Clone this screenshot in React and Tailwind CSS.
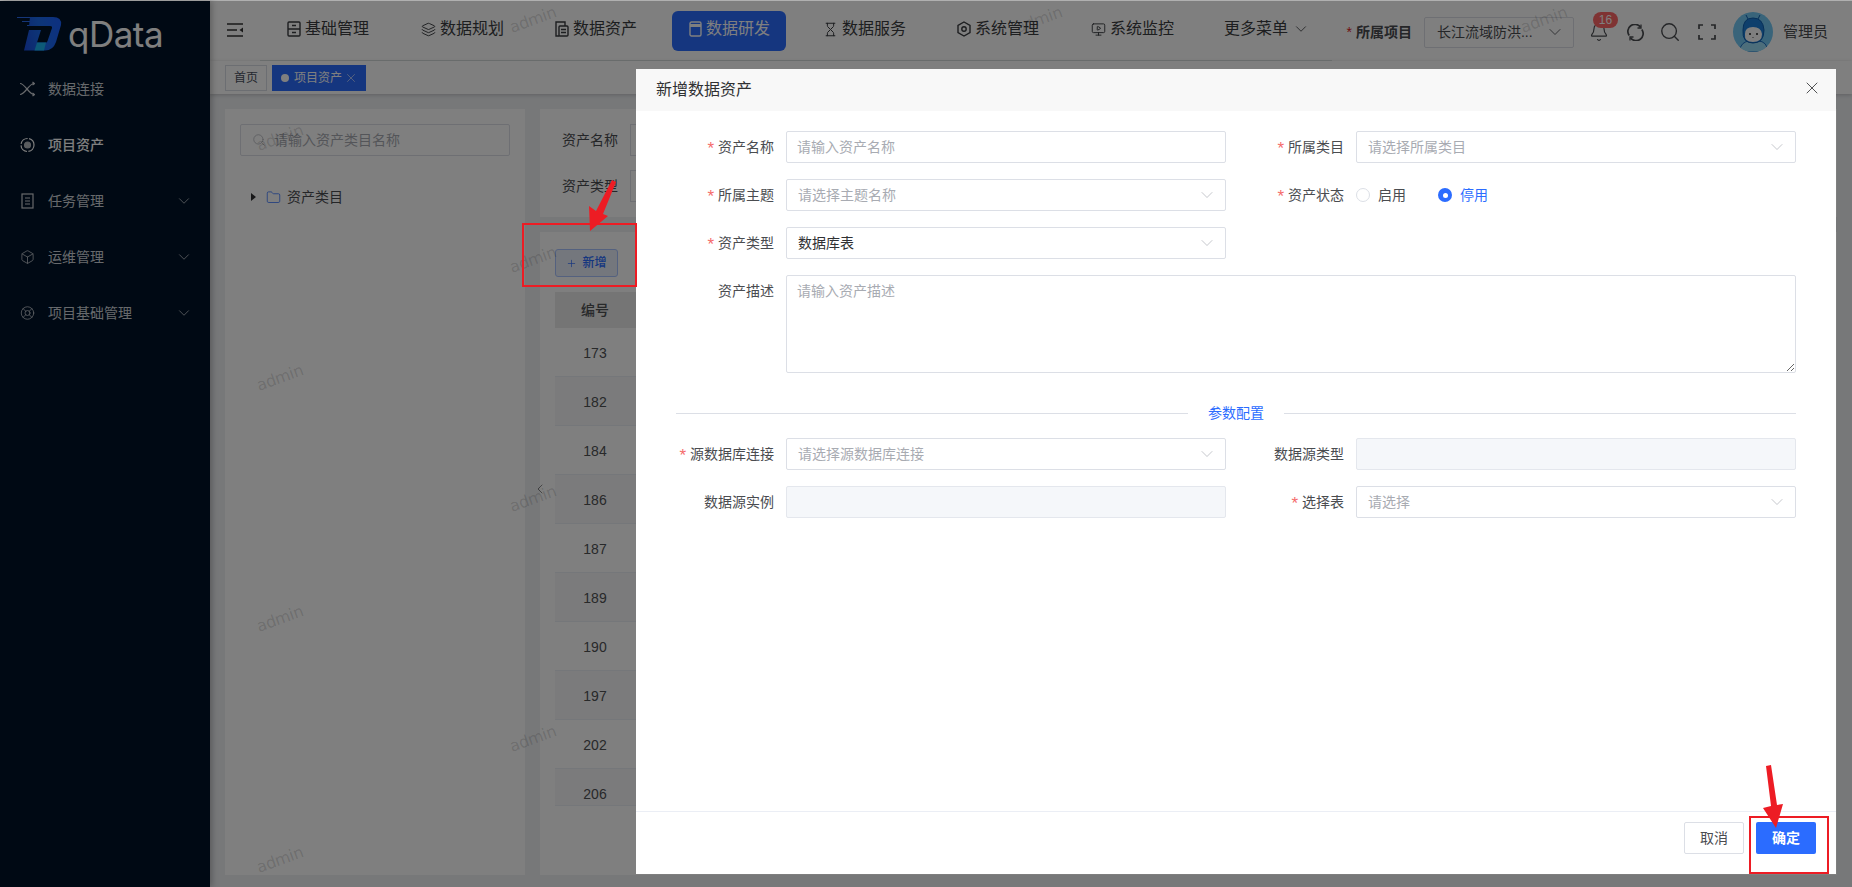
import React from 'react';
import {
  Box, ChevronDown, ChevronLeft, Layers, Hourglass, MonitorPlay, Bell, Search,
  X, Folder, LifeBuoy, Plus,
} from 'lucide-react';

const FONT = "font-['Liberation_Sans','Noto_Sans_CJK_SC',sans-serif]";

// 小图标
function BaseIcon() {
  return (
    <svg width="14" height="16" viewBox="0 0 14 16" fill="none" stroke="currentColor" strokeWidth="1.4">
      <rect x="1" y="1" width="12" height="14" rx="1" />
      <path d="M1 8h12M5 4.500h4M5 11.500h4" />
    </svg>
  );
}

function AssetIcon() {
  return (
    <svg width="14" height="16" viewBox="0 0 14 16" fill="none" stroke="currentColor" strokeWidth="1.4">
      <path d="M10 5V1H1v14h3" />
      <rect x="4" y="5" width="9" height="10" rx="1" />
      <path d="M6 8.500h5M6 11.500h5" />
    </svg>
  );
}

function DevIcon() {
  return (
    <svg width="13" height="16" viewBox="0 0 13 16" fill="none" stroke="currentColor" strokeWidth="1.4">
      <rect x="1" y="1" width="11" height="14" rx="1.500" />
      <path d="M1 4.500h11" strokeWidth="3" />
    </svg>
  );
}

function HexIcon() {
  return (
    <svg width="14" height="16" viewBox="0 0 14 16" fill="none" stroke="currentColor" strokeWidth="1.4">
      <path d="M7 1l6 3.500v7L7 15l-6-3.500v-7z" />
      <circle cx="7" cy="8" r="2.200" />
    </svg>
  );
}

function LinkIcon() {
  return (
    <svg width="15" height="16" viewBox="0 0 15 16" fill="none" stroke="currentColor" strokeWidth="1.2">
      <path d="M0 2.500C5 2.500 9 13.500 14 13.500M0 13.500C5 13.500 9 2.500 14 2.500" />
      <path d="M12.500 1l2 1.500-2 1.500M12.500 12l2 1.500-2 1.500" />
    </svg>
  );
}

function AssetSideIcon() {
  return (
    <svg width="15" height="16" viewBox="0 0 15 16" fill="none" stroke="currentColor" strokeWidth="1.2">
      <circle cx="7.500" cy="8" r="6.500" strokeDasharray="9 1.500" />
      <circle cx="7.500" cy="8" r="3" fill="currentColor" opacity="0.7" />
    </svg>
  );
}

function TaskIcon() {
  return (
    <svg width="13" height="16" viewBox="0 0 13 16" fill="none" stroke="currentColor" strokeWidth="1.2">
      <rect x="1" y="1" width="11" height="14" />
      <path d="M4 5h5M4 8h5M4 11h5" />
    </svg>
  );
}

function MenuFold() {
  return (
    <svg width="16" height="14" viewBox="0 0 16 14" fill="none" stroke="currentColor" strokeWidth="1.500">
      <path d="M0 1h16M0 7h10M0 13h16" />
      <path d="M16 4.500L12.500 7l3.500 2.500z" fill="currentColor" stroke="none" />
    </svg>
  );
}

function RefreshIcon() {
  return (
    <svg width="17" height="17" viewBox="0 0 17 17" fill="none" stroke="currentColor" strokeWidth="1.700" className="ml-[18px]">
      <path d="M2.200 11.500A7 7 0 0 1 13.500 3.200" />
      <path d="M14.800 5.500A7 7 0 0 1 3.500 13.800" />
      <path d="M14 0.500v3.500h-3.500M3 16.500V13h3.500" strokeWidth="1.300" />
    </svg>
  );
}

function FullScreenIcon() {
  return (
    <svg width="18" height="16" viewBox="0 0 18 16" fill="none" stroke="currentColor" strokeWidth="1.700" className="ml-[17px]">
      <path d="M1 5V1h4M13 1h4v4M17 11v4h-4M5 15H1v-4" />
    </svg>
  );
}

function Logo() {
  return (
    <svg width="45" height="34" viewBox="0 0 45 34" className="shrink-0">
      <defs>
        <linearGradient id="logo-d" x1="0" y1="0.8" x2="1" y2="0.6">
          <stop offset="0" stopColor="#1a4fe0" />
          <stop offset="0.5" stopColor="#1a6cf0" />
          <stop offset="1" stopColor="#1a62ff" />
        </linearGradient>
      </defs>
      <path d="M0 0h13v1H0zM5 4h11v1H5zM10 8h5v1h-5z" fill="#2a6cf0" />
      <path
        d="M13 0H36Q45 0 44 8L39 25Q36 33.500 28 33.500H7L12 13H24L20 25.500H29Q30 25.500 30.500 24L35 11Q35.500 9 33 9H12Z"
        fill="url(#logo-d)"
      />
      <path d="M20 25.500H29L27 33.500H17.500Z" fill="#1ab4f0" />
    </svg>
  );
}

function Avatar() {
  return (
    <svg width="40" height="40" viewBox="0 0 40 40" className="rounded-full shrink-0">
      <rect width="40" height="40" fill="#72c8f5" />
      <path d="M6 40q2-11 11-11h8q9 0 10 11z" fill="#9bdcf7" stroke="#1b6fc4" strokeWidth="1" />
      <path d="M10 18q0-12 10-12t11 12q0 13-11 13T10 18z" fill="#1d7fd8" stroke="#0f5fb0" strokeWidth="1" />
      <path d="M12 22q0-7 8-7t9 7q0 8-9 8t-8-8z" fill="#ffffff" />
      <circle cx="17" cy="22" r="1" fill="#222" />
      <circle cx="24" cy="22" r="1" fill="#222" />
      <path d="M20 25v1" stroke="#222" strokeWidth="0.800" />
      <path d="M15 7l-2-4M25 7l2-4" stroke="#0f5fb0" strokeWidth="1" />
    </svg>
  );
}

const sideMenu = [
  { label: '数据连接', icon: <LinkIcon /> },
  { label: '项目资产', icon: <AssetSideIcon />, active: true },
  { label: '任务管理', icon: <TaskIcon />, arrow: true },
  { label: '运维管理', icon: <Box size={16} strokeWidth={1.2} />, arrow: true },
  { label: '项目基础管理', icon: <LifeBuoy size={16} strokeWidth={1.2} />, arrow: true },
];

const navItems = [
  { label: '基础管理', icon: <BaseIcon /> },
  { label: '数据规划', icon: <Layers size={15} strokeWidth={1.5} /> },
  { label: '数据资产', icon: <AssetIcon /> },
  { label: '数据研发', icon: <DevIcon />, active: true },
  { label: '数据服务', icon: <Hourglass size={15} strokeWidth={1.6} /> },
  { label: '系统管理', icon: <HexIcon /> },
  { label: '系统监控', icon: <MonitorPlay size={15} strokeWidth={1.5} /> },
];

const rowIds = [173, 182, 184, 186, 187, 189, 190, 197, 202, 206];

// 水印坐标（中心点）
const marks = [
  { id: 1, x: 533, y: 20 },
  { id: 2, x: 1039, y: 20 },
  { id: 3, x: 1544, y: 20 },
  { id: 4, x: 280, y: 138 },
  { id: 5, x: 533, y: 260 },
  { id: 6, x: 280, y: 378 },
  { id: 7, x: 533, y: 499 },
  { id: 8, x: 280, y: 619 },
  { id: 9, x: 533, y: 739 },
  { id: 10, x: 280, y: 860 },
];

function Field({ label, required, children }) {
  return (
    <div className="flex items-start">
      <label className="w-[130px] shrink-0 pr-3 h-8 leading-8 text-right text-sm text-[#4a4c50]">
        {required && <span className="mr-1 text-[17px] leading-none align-[-2px] text-[#f56c6c]">*</span>}
        {label}
      </label>
      <div className="flex-1">{children}</div>
    </div>
  );
}

function TextInput({ placeholder }) {
  return (
    <input
      readOnly
      placeholder={placeholder}
      className="block w-full h-8 px-[10px] border border-[#dcdfe6] rounded-[2px] text-sm outline-none placeholder:text-[#a8abb2]"
    />
  );
}

function SelectBox({ placeholder, value }) {
  return (
    <div className="flex items-center justify-between w-full h-8 pl-[11px] pr-2 border border-[#dcdfe6] rounded-[2px] text-sm">
      <span className={value ? 'text-[#303133]' : 'text-[#a8abb2]'}>{value || placeholder}</span>
      <ChevronDown size={20} strokeWidth={0.8} className="text-[#a8abb2]" />
    </div>
  );
}

function Sidebar() {
  return (
    <aside className="relative w-[210px] shrink-0 bg-[#001228] shadow-[2px_0_6px_rgba(0,0,0,0.25)]">
      <div className="flex items-center h-[60px] pl-[17px] pt-[6px]">
        <Logo />
        <span className="ml-[6px] text-[35px] leading-none text-white font-['Inter',sans-serif] tracking-[-0.5px]">qData</span>
      </div>
      <nav>
        {sideMenu.map((item) => (
          <div
            key={item.label}
            className={`flex items-center h-14 pl-5 pr-[17px] text-sm ${item.active ? 'text-white font-medium' : 'text-[#cfd3d8]'}`}
          >
            <span className="w-[15px] flex justify-center">{item.icon}</span>
            <span className="ml-[13px] flex-1">{item.label}</span>
            {item.arrow && <ChevronDown size={18} strokeWidth={1} />}
          </div>
        ))}
      </nav>
    </aside>
  );
}

function Header() {
  return (
    <header className="bg-white">
      <div className="flex items-center h-[59px] text-[#505255]">
        <span className="ml-[17px] mr-[27px] pb-[2px] text-[#333]"><MenuFold /></span>
        <div className="flex gap-5">
          {navItems.map((item) => (
            <div
              key={item.label}
              className={`flex items-center gap-[4px] w-[114px] h-10 pl-[17px] pb-[3px] rounded-md text-base ${item.active ? 'bg-[#2b6cff] text-white' : 'text-[#3a3c40]'}`}
            >
              {item.icon}
              <span>{item.label}</span>
            </div>
          ))}
          <div className="flex items-center w-[114px] h-10 pl-[16px] pb-[3px] text-base text-[#3a3c40]">
            <span>更多菜单</span>
            <ChevronDown size={18} strokeWidth={1.1} className="ml-1" />
          </div>
        </div>
        <div className="ml-auto mr-[24px] pt-[3px] flex items-center text-[#4a4c50]">
          <span className="text-sm text-[#e02020] mr-[4px]">*</span>
          <span className="text-sm font-bold whitespace-nowrap">所属项目</span>
          <div className="ml-[12px] flex items-center justify-between w-[150px] h-[31px] pl-3 pr-2 border border-[#dcdfe6] rounded-[2px] text-sm">
            <span className="whitespace-nowrap">长江流域防洪...</span>
            <ChevronDown size={20} strokeWidth={1} />
          </div>
          <div className="relative ml-[15px]">
            <Bell size={20} strokeWidth={1.4} />
            <span className="absolute left-[4px] top-[-10px] flex items-center justify-center w-[25px] h-4 rounded-full bg-[#ff6666] text-xs text-white">16</span>
          </div>
          <RefreshIcon />
          <Search size={22} strokeWidth={1.5} className="ml-[15px]" />
          <FullScreenIcon />
          <span className="ml-[17px]"><Avatar /></span>
          <span className="ml-[10px] text-[15px] whitespace-nowrap">管理员</span>
        </div>
      </div>
      <div className="h-px bg-white">
        <div className="ml-[50px] w-[1072px] h-px bg-[#dde3e3]" />
      </div>
      <div className="flex h-[33px] pt-1 pl-[15px] gap-[5px] shadow-[0_1px_4px_rgba(0,0,0,0.2)] text-xs">
        <div className="flex items-center justify-center w-[42px] h-[26px] border border-[#d8dce5] text-[#495060]">首页</div>
        <div className="flex items-center w-[94px] h-[26px] pl-[9px] bg-[#2b6cff] text-white">
          <span className="w-2 h-2 rounded-full bg-white mr-[5px]" />
          <span>项目资产</span>
          <X size={14} strokeWidth={1} className="ml-[2px]" />
        </div>
      </div>
    </header>
  );
}

function Content() {
  return (
    <main className="flex-1 flex gap-[15px] pt-[15px] pl-[15px] pr-[15px] pb-3 min-h-0 relative">
      <section className="w-[300px] shrink-0 bg-white px-[15px] pt-[15px]">
        <div className="flex items-center h-8 pl-[11px] border border-[#dcdfe6] rounded-[2px] text-sm text-[#a8abb2]">
          <Search size={14} strokeWidth={1.2} />
          <span className="ml-2">请输入资产类目名称</span>
        </div>
        <div className="flex items-center mt-[31px] pl-[11px] text-sm text-[#4a4c50]">
          <span className="w-0 h-0 border-y-[4px] border-y-transparent border-l-[5px] border-l-[#303133]" />
          <Folder size={15} strokeWidth={1.2} className="ml-[10px] text-[#2b6cff]" />
          <span className="ml-[6px]">资产类目</span>
        </div>
      </section>
      <ChevronLeft size={16} strokeWidth={0.8} className="absolute left-[322px] top-[387px] text-[#222]" />
      <div className="flex-1 flex flex-col gap-[15px] min-w-0">
        <section className="h-[108px] bg-white pt-[15px] pl-[22px] flex flex-col gap-[14px] text-sm text-[#4a4c50]">
          <div className="flex items-center h-8">
            <span className="w-[68px]">资产名称</span>
            <div className="w-[300px] h-8 border border-[#dcdfe6]" />
          </div>
          <div className="flex items-center h-8">
            <span className="w-[68px]">资产类型</span>
            <div className="w-[300px] h-8 border border-[#dcdfe6]" />
          </div>
        </section>
        <section className="flex-1 bg-white px-[15px] pt-[17px] min-h-0">
          <div className="flex items-center justify-center gap-[5px] w-[63px] h-7 border border-[#a8c3ff] bg-[#e8eefb] rounded-[3px] text-xs font-medium text-[#2b6cff]">
            <Plus size={11} strokeWidth={1.5} />
            <span>新增</span>
          </div>
          <div className="mt-[15px] h-9 bg-[#ebebeb] flex items-center text-sm font-medium text-[#505255]">
            <span className="w-20 text-center">编号</span>
          </div>
          <div className="h-[478px] overflow-hidden border-b border-[#ebeef5]">
            {rowIds.map((id, i) => (
              <div
                key={id}
                className={`flex items-center h-[49px] pt-px border-b border-[#ebeef5] text-sm text-[#505255] ${i % 2 === 1 ? 'bg-[#f7f7f8]' : ''}`}
              >
                <span className="w-20 text-center">{id}</span>
              </div>
            ))}
          </div>
        </section>
      </div>
    </main>
  );
}

function AssetDialog() {
  return (
    <div className={`absolute left-[636px] top-[69px] w-[1200px] h-[805px] flex flex-col bg-white ${FONT}`}>
      <div className="flex items-center justify-between h-[42px] shrink-0 pl-5 pr-[14px] bg-[#f8f8f8]">
        <span className="text-base text-[#303133]">新增数据资产</span>
        <X size={20} strokeWidth={1} className="text-[#303133] mb-1" />
      </div>
      <div className="flex-1 pt-5 pl-5">
        <div className="grid grid-cols-[570px_570px] gap-y-4">
          <Field label="资产名称" required><TextInput placeholder="请输入资产名称" /></Field>
          <Field label="所属类目" required><SelectBox placeholder="请选择所属类目" /></Field>
          <Field label="所属主题" required><SelectBox placeholder="请选择主题名称" /></Field>
          <Field label="资产状态" required>
            <div className="flex items-center h-8 text-sm">
              <span className="w-[14px] h-[14px] rounded-full border border-[#dcdfe6]" />
              <span className="ml-2 text-[#4a4c50]">启用</span>
              <span className="ml-8 flex items-center justify-center w-[14px] h-[14px] rounded-full bg-[#2b6cff]">
                <span className="w-[5px] h-[5px] rounded-full bg-white" />
              </span>
              <span className="ml-2 text-[#2b6cff]">停用</span>
            </div>
          </Field>
          <Field label="资产类型" required><SelectBox value="数据库表" /></Field>
          <div />
          <div className="col-span-2">
            <Field label="资产描述">
              <textarea
                readOnly
                placeholder="请输入资产描述"
                className="block w-full h-[98px] px-[10px] py-[5px] border border-[#dcdfe6] rounded-[2px] text-sm outline-none placeholder:text-[#a8abb2]"
              />
            </Field>
          </div>
        </div>
        <div className="flex items-center ml-5 w-[1120px] h-5 mt-[30px] mb-[15px]">
          <span className="flex-1 h-px bg-[#dcdfe6]" />
          <span className="px-5 text-sm text-[#2b6cff]">参数配置</span>
          <span className="flex-1 h-px bg-[#dcdfe6]" />
        </div>
        <div className="grid grid-cols-[570px_570px] gap-y-4">
          <Field label="源数据库连接" required><SelectBox placeholder="请选择源数据库连接" /></Field>
          <Field label="数据源类型"><div className="h-8 bg-[#f5f7fa] border border-[#e4e7ed] rounded-[2px]" /></Field>
          <Field label="数据源实例"><div className="h-8 bg-[#f5f7fa] border border-[#e4e7ed] rounded-[2px]" /></Field>
          <Field label="选择表" required><SelectBox placeholder="请选择" /></Field>
        </div>
      </div>
      <div className="flex justify-end gap-3 h-[63px] shrink-0 pt-[10px] pr-5 border-t border-[#ebeef5] text-sm">
        <button className="w-[60px] h-8 border border-[#dcdfe6] rounded-[2px] text-[#4a4c50]">取消</button>
        <button className="w-[60px] h-8 rounded-[2px] bg-[#2b6cff] text-white font-bold">确定</button>
      </div>
    </div>
  );
}

export default function App() {
  return (
    <div className={`relative w-full h-[887px] overflow-hidden bg-[#eef0f3] ${FONT}`}>
      <div className="h-px bg-[#b0b0b0]" />
      <div className="flex h-[886px]">
        <Sidebar />
        <div className="flex-1 min-w-0 flex flex-col">
          <Header />
          <Content />
        </div>
      </div>

      {/* 水印 */}
      {marks.map((m) => (
        <span
          key={m.id}
          className="absolute -translate-x-1/2 -translate-y-1/2 -rotate-[20deg] text-base text-black/15 font-['DejaVu_Sans',sans-serif] tracking-tight pointer-events-none"
          style={{ left: m.x, top: m.y }}
        >
          admin
        </span>
      ))}

      {/* 遮罩 */}
      <div className="absolute inset-x-0 top-px bottom-0 bg-black/50" />

      <AssetDialog />

      {/* 红色标注 */}
      <div className="absolute left-[522px] top-[223px] w-[115px] h-[64px] border-2 border-[#ed1c24]" />
      <div className="absolute left-[1749px] top-[816px] w-[80px] h-[58px] border-2 border-[#ed1c24]" />
      <svg className="absolute left-0 top-0 pointer-events-none" width="1852" height="887" fill="#ed1c24">
        <polygon points="612,180 616,182 603,214 608,216 590,231 589,206 596,211" />
        <polygon points="1766,766 1771,765 1777,805 1783,804 1776,828 1763,808 1771,806" />
      </svg>
    </div>
  );
}
